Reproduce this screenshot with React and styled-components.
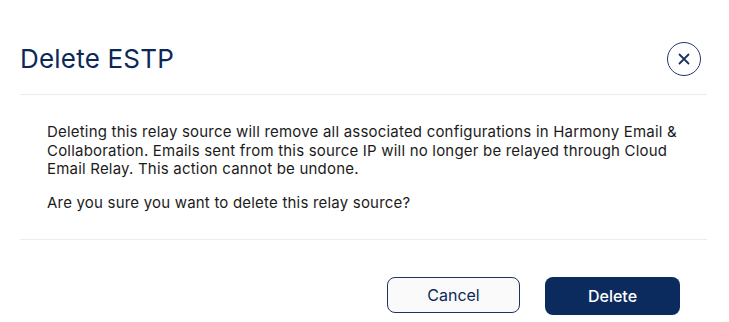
import styled, { createGlobalStyle } from 'styled-components';

const GlobalStyle = createGlobalStyle`
  html, body {
    margin: 0;
    padding: 0;
    background: #ffffff;
  }
  body {
    font-family: Inter, "Open Sans", "Liberation Sans", sans-serif;
    -webkit-font-smoothing: antialiased;
  }
`;

const Modal = styled.div`
  width: 729px;
  box-sizing: border-box;
  padding: 0 22px 0 20px;
  background: #fff;
`;

const Header = styled.div`
  display: flex;
  align-items: center;
  justify-content: space-between;
  height: 70px;
  padding-top: 24px;
  border-bottom: 1px solid #ececec;
`;

const Title = styled.h1`
  margin: 0 0 2px;
  font-size: 26px;
  font-weight: 400;
  letter-spacing: 0.2px;
  color: #0c2857;
`;

const CloseButton = styled.button`
  width: 34px;
  height: 34px;
  margin-right: 6px;
  padding: 0;
  border: 1.5px solid #1f3866;
  border-radius: 50%;
  background: #fff;
  display: flex;
  align-items: center;
  justify-content: center;
  cursor: pointer;
`;

const Body = styled.div`
  padding: 28px 27px 27px;
  border-bottom: 1px solid #ececec;
`;

const Text = styled.p`
  margin: 0 0 ${(p) => (p.$last ? 0 : 15)}px;
  font-size: 15px;
  line-height: 18.5px;
  letter-spacing: 0.2px;
  color: #1b1b1b;
`;

const Footer = styled.div`
  display: flex;
  justify-content: flex-end;
  align-items: flex-start;
  gap: 25px;
  padding: 37px 27px 0 0;
`;

const Button = styled.button`
  box-sizing: border-box;
  width: ${(p) => (p.$primary ? 135 : 133)}px;
  height: ${(p) => (p.$primary ? 38 : 36)}px;
  border-radius: 8px;
  font-family: inherit;
  font-size: 16px;
  font-weight: ${(p) => (p.$primary ? 500 : 400)};
  color: ${(p) => (p.$primary ? '#ffffff' : '#0c2857')};
  background: ${(p) => (p.$primary ? '#0b2a5e' : '#fafafa')};
  border: ${(p) => (p.$primary ? 'none' : '1px solid #1d3461')};
  cursor: pointer;
`;

const CloseIcon = () => (
  <svg width="12" height="12" viewBox="0 0 12 12">
    <path d="M1.5 1.5 L10.5 10.5 M10.5 1.5 L1.5 10.5" stroke="#1a3263" strokeWidth="1.8" strokeLinecap="round" />
  </svg>
);

export default function App() {
  return (
    <>
      <GlobalStyle />
      <Modal>
        <Header>
          <Title>Delete ESTP</Title>
          <CloseButton aria-label="Close">
            <CloseIcon />
          </CloseButton>
        </Header>
        <Body>
          <Text>
            Deleting this relay source will remove all associated configurations in Harmony Email &amp;
            Collaboration. Emails sent from this source IP will no longer be relayed through Cloud
            Email Relay. This action cannot be undone.
          </Text>
          <Text $last>Are you sure you want to delete this relay source?</Text>
        </Body>
        <Footer>
          <Button>Cancel</Button>
          <Button $primary>Delete</Button>
        </Footer>
      </Modal>
    </>
  );
}
